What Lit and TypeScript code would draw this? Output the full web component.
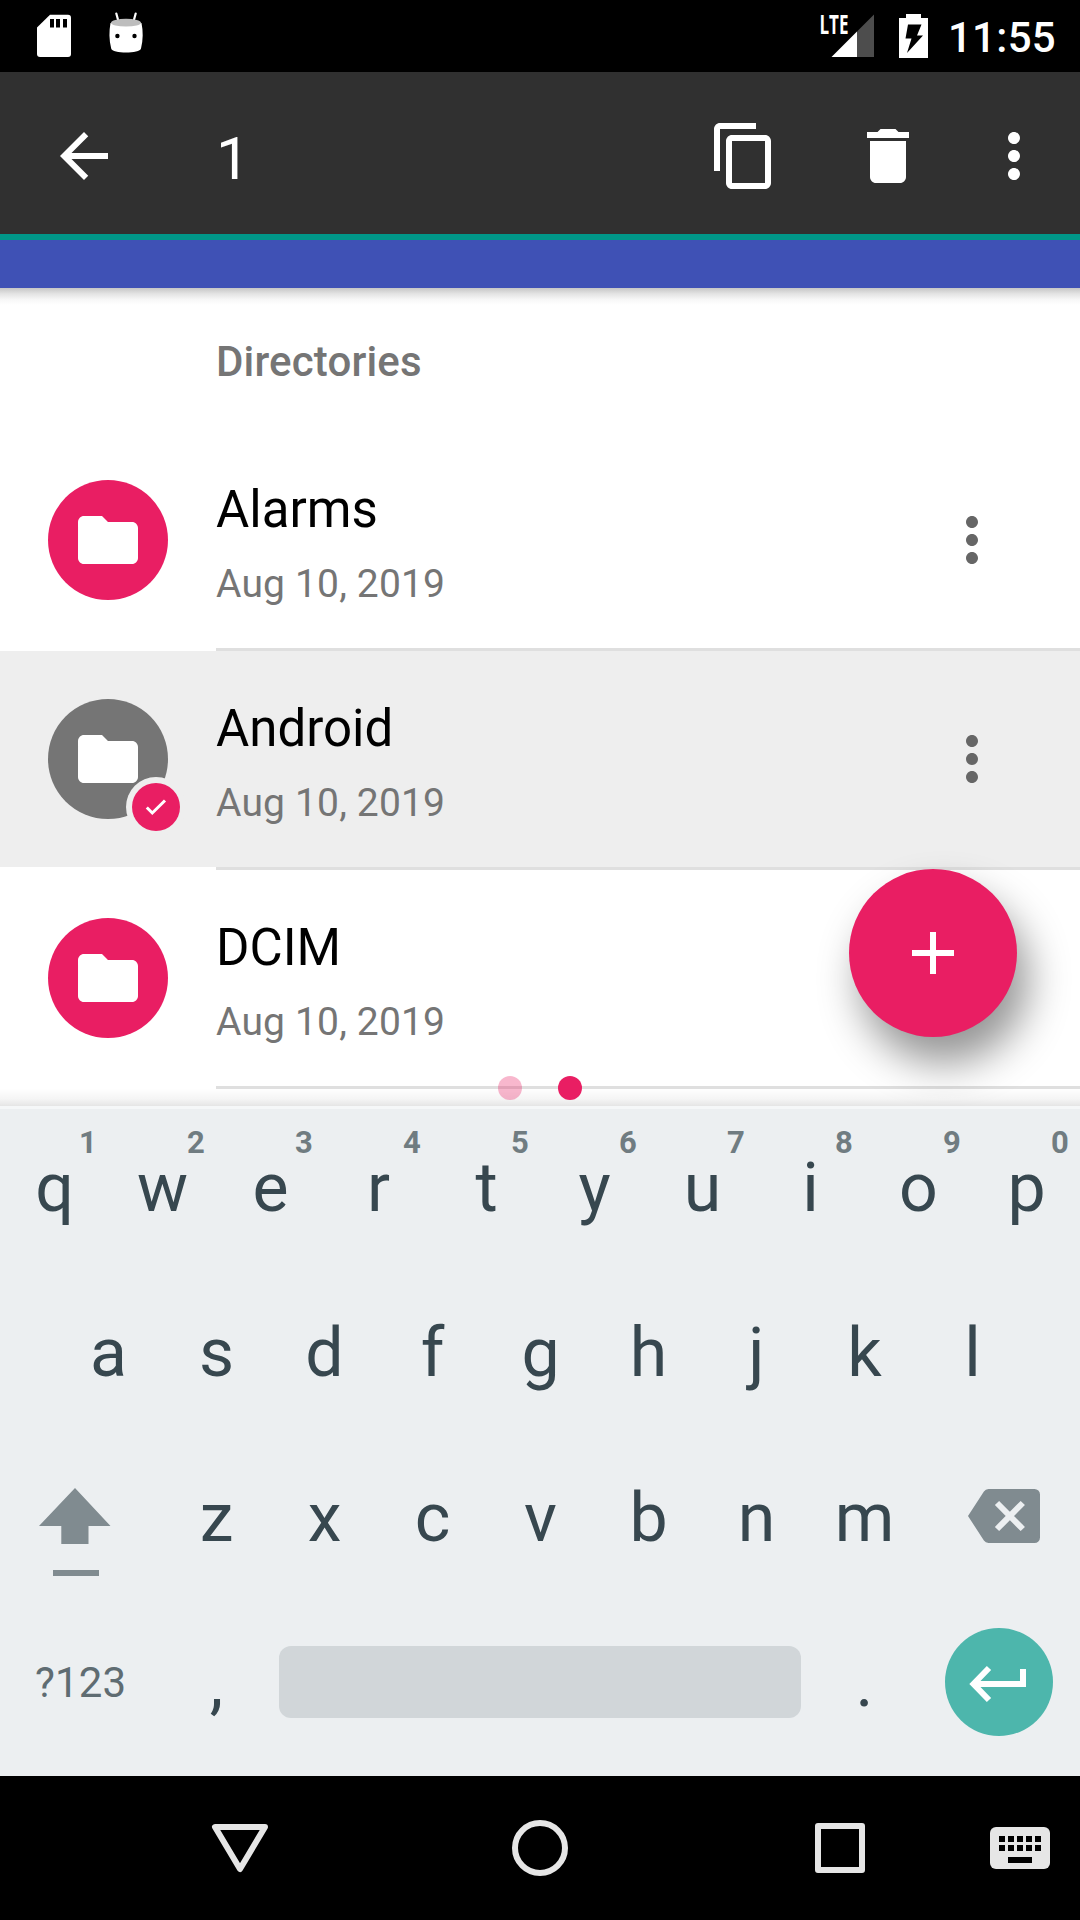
import { LitElement, html, css, svg } from "lit";
import { customElement } from "lit/decorators.js";
import { classMap } from "lit/directives/class-map.js";

interface Entry {
  name: string;
  date: string;
  selected: boolean;
}

const ENTRIES: Entry[] = [
  { name: "Alarms", date: "Aug 10, 2019", selected: false },
  { name: "Android", date: "Aug 10, 2019", selected: true },
  { name: "DCIM", date: "Aug 10, 2019", selected: false },
];

const icon24 = (d: string) => html`<svg class="icon" viewBox="0 0 24 24"><path d=${d}></path></svg>`;

const BACK = "M20 11H7.83l5.59-5.59L12 4l-8 8 8 8 1.41-1.41L7.83 13H20v-2z";
const COPY =
  "M16 1H4c-1.1 0-2 .9-2 2v14h2V3h12V1zm3 4H8c-1.1 0-2 .9-2 2v14c0 1.1.9 2 2 2h11c1.1 0 2-.9 2-2V7c0-1.1-.9-2-2-2zm0 16H8V7h11v14z";
const TRASH = "M6 19c0 1.1.9 2 2 2h8c1.1 0 2-.9 2-2V7H6v12zM19 4h-3.5l-1-1h-5l-1 1H5v2h14V4z";
const MORE =
  "M12 8c1.1 0 2-.9 2-2s-.9-2-2-2-2 .9-2 2 .9 2 2 2zm0 2c-1.1 0-2 .9-2 2s.9 2 2 2 2-.9 2-2-.9-2-2-2zm0 6c-1.1 0-2 .9-2 2s.9 2 2 2 2-.9 2-2-.9-2-2-2z";
const FOLDER = "M10 4H4c-1.1 0-1.99.9-1.99 2L2 18c0 1.1.9 2 2 2h16c1.1 0 2-.9 2-2V8c0-1.1-.9-2-2-2h-8l-2-2z";
const PLUS = "M19 13h-6v6h-2v-6H5v-2h6V5h2v6h6v2z";

@customElement("status-bar")
class StatusBar extends LitElement {
  static styles = css`
    :host {
      display: flex;
      align-items: center;
      height: 72px;
      padding: 0 24px 0 30px;
      background: #000;
      color: #fff;
      font-family: Roboto, sans-serif;
    }
    .notes { display: flex; gap: 24px; flex: 1; }
    .glyph { display: block; width: 48px; height: 72px; flex: none; }
    .signal { width: 66px; }
    .battery { width: 48px; margin-left: 8px; }
    .lte { font: 700 26px "Open Sans", sans-serif; fill: #fff; }
    .clock {
      width: 119px;
      font-size: 42px;
      font-weight: 500;
      letter-spacing: 0.3px;
      line-height: 72px;
      padding-top: 3px;
      text-align: right;
    }
  `;
  render() {
    return html`
      <div class="notes">
        <svg class="glyph" viewBox="30 0 48 72">
          <path fill="#fff" d="M50 14.7H68a3 3 0 0 1 3 3V54a3 3 0 0 1-3 3H40a3 3 0 0 1-3-3V27.5z"></path>
          <path d="M50 19h4v8.500h-4zM56 19h4v8.500h-4zM63 19h4v8.500h-4z"></path>
        </svg>
        <svg class="glyph" viewBox="102 0 48 72">
          <path d="M116.300 13.500l2.200 8M135.700 13.500l-2.200 8" stroke="#fff" stroke-width="2.200" stroke-linecap="round"></path>
          <path fill="#fff" d="M110.500 23C109 31 109 40 111.200 48.500C112 53.800 140 53.800 141 48.500C143.200 40 143.200 31 141.500 23z"></path>
          <ellipse cx="126" cy="22.700" rx="15" ry="3.900" fill="#bdbdbd"></ellipse>
          <circle cx="117.400" cy="36" r="2.200"></circle>
          <circle cx="134.500" cy="36" r="2.200"></circle>
        </svg>
      </div>
      <svg class="glyph signal" viewBox="815 0 66 72">
        <path fill="#4d4d4d" d="M874 14.500V57H857V31.500z"></path>
        <path fill="#fff" d="M857 31.500V57H831.500z"></path>
        <text class="lte" x="819.500" y="33.700" textLength="29" lengthAdjust="spacingAndGlyphs">LTE</text>
      </svg>
      <svg class="glyph battery" viewBox="889 0 48 72">
        <path fill="#fff" d="M906 14h15v4h7v40h-29V18h7z"></path>
        <path d="M908 24.500h13.500L917 35.500h6L907 53l4.500-14.500H905.500z"></path>
      </svg>
      <span class="clock">11:55</span>
    `;
  }
}

@customElement("action-bar")
class ActionBar extends LitElement {
  static styles = css`
    :host {
      display: flex;
      align-items: center;
      box-sizing: border-box;
      height: 168px;
      padding: 0 30px 0 48px;
      background: #303030;
      box-shadow: inset 0 -6px #009688;
      color: #fff;
      font-family: Roboto, sans-serif;
    }
    .icon { display: block; width: 72px; height: 72px; fill: currentColor; }
    .title { flex: 1; padding: 5px 0 0 96px; font-size: 60px; line-height: 72px; }
    .actions { display: flex; }
    .actions .icon + .icon { margin-left: 72px; }
    .actions .icon:last-child { margin-left: 54px; }
  `;
  render() {
    return html`
      ${icon24(BACK)}
      <span class="title">1</span>
      <div class="actions">${icon24(COPY)}${icon24(TRASH)}${icon24(MORE)}</div>
    `;
  }
}

@customElement("file-list")
class FileList extends LitElement {
  static styles = css`
    :host {
      display: block;
      position: relative;
      height: 818px;
      overflow: hidden;
      background: #fff;
      font-family: Roboto, sans-serif;
    }
    .edge { position: absolute; left: 0; right: 0; height: 17px; }
    .edge.top { top: 0; background: linear-gradient(#c6c6c6, #e4e4e4 35%, #f8f8f8 70%, #fff0); }
    .edge.bottom { bottom: 0; height: 18px; background: linear-gradient(#fff0, #0000000a 60%, #0000001a); }
    .heading {
      height: 144px;
      box-sizing: border-box;
      padding: 2px 0 0 216px;
      color: #757575;
      font-size: 42px;
      font-weight: 500;
      letter-spacing: 0.15px;
      line-height: 144px;
    }
    .row { display: flex; align-items: center; height: 216px; padding-left: 48px; }
    .row.selected { background: #eee; }
    .rule { height: 3px; margin-left: 216px; background: #dfdfdf; }
    .avatar {
      position: relative;
      display: grid;
      place-items: center;
      width: 120px;
      height: 120px;
      border-radius: 50%;
      background: #e91e63;
      color: #fff;
    }
    .selected .avatar { background: #757575; }
    .icon { display: block; width: 72px; height: 72px; fill: currentColor; }
    .badge {
      position: absolute;
      left: 78px;
      top: 78px;
      width: 60px;
      height: 60px;
    }
    .text { flex: 1; padding: 7px 0 0 48px; }
    .name { font-size: 51px; line-height: 72px; color: #000; }
    .date { font-size: 39px; letter-spacing: 0.17px; line-height: 60px; padding-top: 8px; color: #757575; }
    .menu { width: 72px; margin-right: 72px; color: #666; }
    .fab {
      position: absolute;
      left: 849px;
      top: 581px;
      display: grid;
      place-items: center;
      width: 168px;
      height: 168px;
      border-radius: 50%;
      background: #e91e63;
      color: #fff;
      box-shadow: 11px 26px 42px rgba(0, 0, 0, 0.42);
    }
    .pager { position: absolute; left: 498px; bottom: 6px; display: flex; gap: 36px; }
    .dot { width: 24px; height: 24px; border-radius: 50%; background: #e91e63; }
    .dot.dim { opacity: 0.32; }
  `;
  private row(e: Entry) {
    return html`
      <div class=${classMap({ row: true, selected: e.selected })}>
        <div class="avatar">
          ${icon24(FOLDER)}
          ${e.selected
            ? html`<svg class="badge" viewBox="0 0 60 60">
                <circle cx="30" cy="30" r="30" fill="#eee"></circle>
                <circle cx="30" cy="30" r="24" fill="#e91e63"></circle>
                <path d="M20.800 30.500L26.300 36L39 23.500" fill="none" stroke="#fff" stroke-width="3"></path>
              </svg>`
            : null}
        </div>
        <div class="text">
          <div class="name">${e.name}</div>
          <div class="date">${e.date}</div>
        </div>
        <div class="menu">${icon24(MORE)}</div>
      </div>
      <div class="rule"></div>
    `;
  }
  render() {
    return html`
      <div class="heading">Directories</div>
      ${ENTRIES.map((e) => this.row(e))}
      <div class="edge top"></div>
      <div class="fab">${icon24(PLUS)}</div>
      <div class="edge bottom"></div>
      <div class="pager"><span class="dot dim"></span><span class="dot"></span></div>
    `;
  }
}

@customElement("soft-keyboard")
class SoftKeyboard extends LitElement {
  static styles = css`
    :host {
      display: block;
      box-sizing: border-box;
      height: 670px;
      background: #eceff1;
      box-shadow: inset 0 3px #f5f7f8;
      color: #37474f;
      font-family: Roboto, sans-serif;
    }
    .row { display: flex; justify-content: center; height: 165px; }
    .key {
      position: relative;
      box-sizing: border-box;
      width: 108px;
      padding-left: 1px;
      text-align: center;
      font-size: 68px;
      line-height: 164px;
    }
    .hint {
      position: absolute;
      top: 21px;
      right: 11px;
      width: 18px;
      font-size: 31px;
      font-weight: 700;
      line-height: 32px;
      color: #707c81;
    }
    .wide { width: 162px; height: 165px; display: block; }
    .mode {
      width: 162px;
      box-sizing: border-box;
      padding-left: 35px;
      font-size: 42px;
      letter-spacing: 0.15px;
      line-height: 163px;
      color: #5f6c72;
    }
    .space { width: 522px; height: 72px; margin: 45px 9px 0; border-radius: 12px; background: #d1d6d9; }
    .tool { fill: #808b90; }
  `;
  private keys(letters: string, hints = "") {
    return [...letters].map(
      (c, i) => html`<div class="key">${c}${hints ? html`<span class="hint">${hints[i]}</span>` : null}</div>`,
    );
  }
  render() {
    return html`
      <div class="row">${this.keys("qwertyuiop", "1234567890")}</div>
      <div class="row">${this.keys("asdfghjkl")}</div>
      <div class="row">
        <svg class="wide" viewBox="0 1436 162 165">
          <path class="tool" d="M75 1488L110.500 1526H88.500V1544H61.300V1526H39zM53 1570h46v6h-46z"></path>
        </svg>
        ${this.keys("zxcvbnm")}
        <svg class="wide" viewBox="918 1436 162 165">
          <path
            class="tool"
            d="M988.500 1489H1034.500a5.500 5.500 0 0 1 5.500 5.500V1537.500a5.500 5.500 0 0 1-5.500 5.500H988.500a5.500 5.500 0 0 1-4.600-2.500L968 1516L983.900 1491.500a5.500 5.500 0 0 1 4.600-2.500z"
          ></path>
          <path d="M997 1503L1022.800 1529M1022.800 1503L997 1529" stroke="#eceff1" stroke-width="6"></path>
        </svg>
      </div>
      <div class="row">
        <div class="mode">?123</div>
        ${this.keys(",")}
        <div class="space"></div>
        ${this.keys(".")}
        <svg class="wide" viewBox="918 1601 162 165">
          <circle cx="999" cy="1682" r="54" fill="#4db6ac"></circle>
          <path d="M989 1668L973.500 1684L989 1700M974 1684H1023V1669" fill="none" stroke="#fff" stroke-width="6"></path>
        </svg>
      </div>
    `;
  }
}

@customElement("nav-bar")
class NavBar extends LitElement {
  static styles = css`
    :host { display: block; height: 144px; background: #000; }
    .glyphs { display: block; width: 1080px; height: 144px; }
    .line { fill: none; stroke: #e6e6e6; stroke-width: 6; stroke-linejoin: round; }
  `;
  render() {
    const keys = [0, 1].flatMap((r) =>
      [0, 1, 2, 3, 4].map((c) => svg`<rect x=${999 + c * 9} y=${1836 + r * 9} width="6" height="6"></rect>`),
    );
    return html`
      <svg class="glyphs" viewBox="0 1776 1080 144">
        <path class="line" d="M215 1827H265L240 1869z"></path>
        <circle class="line" cx="540" cy="1848" r="25"></circle>
        <rect class="line" x="818" y="1826" width="44" height="44"></rect>
        <rect x="990" y="1827" width="60" height="42" rx="6" fill="#e6e6e6"></rect>
        ${keys}
        <rect x="1008" y="1857" width="24" height="6"></rect>
      </svg>
    `;
  }
}

@customElement("app-root")
class AppRoot extends LitElement {
  static styles = css`
    :host { display: flex; flex-direction: column; width: 1080px; height: 1920px; overflow: hidden; }
    .tabs { height: 48px; background: #3f51b5; }
  `;
  render() {
    return html`
      <status-bar></status-bar>
      <action-bar></action-bar>
      <div class="tabs"></div>
      <file-list></file-list>
      <soft-keyboard></soft-keyboard>
      <nav-bar></nav-bar>
    `;
  }
}
